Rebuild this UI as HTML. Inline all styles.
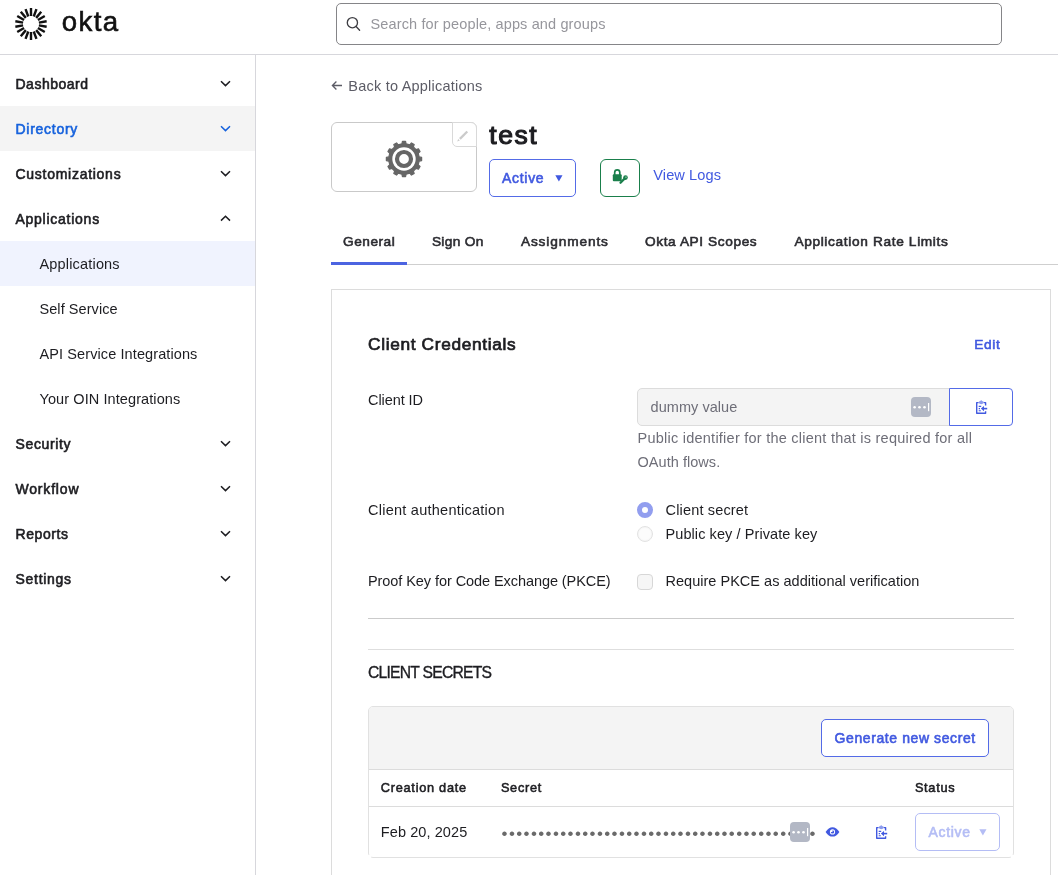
<!DOCTYPE html>
<html lang="en">
<head>
<meta charset="utf-8">
<title>test - Okta Admin</title>
<style>
*{box-sizing:border-box;margin:0;padding:0}
html,body{width:1058px;height:875px;overflow:hidden;background:#fff}
body{position:relative;font-family:"Liberation Sans",sans-serif;color:#1d1d21;font-size:14px}
#root{position:absolute;left:0;top:0;width:1058px;height:875px;will-change:transform}
.a{position:absolute;white-space:nowrap;line-height:1}
.box{position:absolute}
#hdr{left:0;top:0;width:1058px;height:55px;border-bottom:1px solid #d7d7dc;background:#fff}
#side{left:0;top:55px;width:256px;height:820px;border-right:1px solid #d7d7dc;background:#fff}
#search{left:336px;top:3px;width:666px;height:42px;border:1px solid #858588;border-radius:5px}
#logo{left:331px;top:122px;width:146px;height:70px;border:1px solid #c9c9c9;border-radius:6px}
#pen{left:452px;top:122px;width:25px;height:25px;border:1px solid #d9d9d9;border-radius:0 6px 0 5px;background:#fff}
.btn{border:1px solid #546be7;border-radius:5px;background:#fff}
#lockbtn{left:600px;top:159px;width:40px;height:38px;border:1px solid #1a7f4b;border-radius:6px}
#tabline{left:331px;top:264px;width:727px;height:1px;background:#cfcfcf}
#tabsel{left:331px;top:262px;width:76px;height:3px;background:#4c64e1}
#panel{left:331px;top:289px;width:720px;height:600px;border:1px solid #dcdcdc}
#cid{left:637px;top:388px;width:313px;height:38px;background:#f4f4f4;border:1px solid #dcdcdc;border-radius:5px 0 0 5px}
.pm{width:20px;height:20px;border-radius:4px;background:#b3b8c5}
.radio{width:16px;height:16px;border-radius:50%;border:1.5px solid #e2e2e2;background:#fcfcfc;box-shadow:inset 0 0 1.5px #e6e6e6}
.radio.on{border:5px solid #929eef;background:#fff;box-shadow:none}
.chk{width:16px;height:16px;border-radius:4px;border:1px solid #d7d7d7;background:#f6f6f6}
.hr{left:368px;width:646px;height:1px;background:#d4d4d4}
#tbl{left:368px;top:706px;width:646px;height:152px;border:1px solid #e1e1e1;border-radius:5px}
#tbar{left:369px;top:707px;width:644px;height:63px;background:#f4f4f4;border-bottom:1px solid #dcdcdc;border-radius:4px 4px 0 0}
#thead{left:369px;top:806px;width:644px;height:1px;background:#dcdcdc}
</style>
</head>
<body>
<div id="root">
<div class="box" id="hdr"></div>
<div class="box" id="side"></div>
<div class="box" style="left:0;top:106px;width:255px;height:45px;background:#f4f4f4"></div>
<div class="box" style="left:0;top:241px;width:255px;height:45px;background:#f0f3fe"></div>
<svg class="a" style="left:14px;top:7px" width="34" height="34" viewBox="-17 -17 34 34"><path d="M0.00 -8.00L0.00 -15.90M2.74 -7.52L5.44 -14.94M5.14 -6.13L10.22 -12.18M6.93 -4.00L13.77 -7.95M7.88 -1.39L15.66 -2.76M7.88 1.39L15.66 2.76M6.93 4.00L13.77 7.95M5.14 6.13L10.22 12.18M2.74 7.52L5.44 14.94M0.00 8.00L0.00 15.90M-2.74 7.52L-5.44 14.94M-5.14 6.13L-10.22 12.18M-6.93 4.00L-13.77 7.95M-7.88 1.39L-15.66 2.76M-7.88 -1.39L-15.66 -2.76M-6.93 -4.00L-13.77 -7.95M-5.14 -6.13L-10.22 -12.18M-2.74 -7.52L-5.44 -14.94" stroke="#111" stroke-width="2.4" fill="none"/></svg>
<span class="a" style="left:61.8px;top:8px;font-size:27.6px;letter-spacing:1.4px;color:#111;-webkit-text-stroke:0.6px #111">okta</span>
<svg class="a" style="left:220.3px;top:79.8px" width="11" height="7" viewBox="0 0 11 7"><polyline points="1 1.2 5.5 5.6 10 1.2" fill="none" stroke="#1d1d21" stroke-width="1.5"/></svg>
<svg class="a" style="left:220.3px;top:124.8px" width="11" height="7" viewBox="0 0 11 7"><polyline points="1 1.2 5.5 5.6 10 1.2" fill="none" stroke="#1662dd" stroke-width="1.5"/></svg>
<svg class="a" style="left:220.3px;top:169.8px" width="11" height="7" viewBox="0 0 11 7"><polyline points="1 1.2 5.5 5.6 10 1.2" fill="none" stroke="#1d1d21" stroke-width="1.5"/></svg>
<svg class="a" style="left:220.3px;top:214.8px" width="11" height="7" viewBox="0 0 11 7"><polyline points="1 5.6 5.5 1.2 10 5.6" fill="none" stroke="#1d1d21" stroke-width="1.5"/></svg>
<svg class="a" style="left:220.3px;top:439.8px" width="11" height="7" viewBox="0 0 11 7"><polyline points="1 1.2 5.5 5.6 10 1.2" fill="none" stroke="#1d1d21" stroke-width="1.5"/></svg>
<svg class="a" style="left:220.3px;top:484.8px" width="11" height="7" viewBox="0 0 11 7"><polyline points="1 1.2 5.5 5.6 10 1.2" fill="none" stroke="#1d1d21" stroke-width="1.5"/></svg>
<svg class="a" style="left:220.3px;top:529.8px" width="11" height="7" viewBox="0 0 11 7"><polyline points="1 1.2 5.5 5.6 10 1.2" fill="none" stroke="#1d1d21" stroke-width="1.5"/></svg>
<svg class="a" style="left:220.3px;top:574.8px" width="11" height="7" viewBox="0 0 11 7"><polyline points="1 1.2 5.5 5.6 10 1.2" fill="none" stroke="#1d1d21" stroke-width="1.5"/></svg>
<div class="box" id="search"></div>
<svg class="a" style="left:346px;top:16px" width="16" height="16" viewBox="0 0 16 16"><circle cx="6.4" cy="6.7" r="5.1" fill="none" stroke="#3f3f44" stroke-width="1.35"/><path d="M10.1 10.5L13.6 14.2" stroke="#3f3f44" stroke-width="1.35" stroke-linecap="round"/></svg>
<svg class="a" style="left:331px;top:80px" width="12" height="11" viewBox="0 0 12 11"><path d="M11 5.5H1.6M5.4 1.5L1.4 5.5L5.4 9.5" fill="none" stroke="#5c5c66" stroke-width="1.3"/></svg>
<div class="box" id="logo"></div>
<div class="box" id="pen"></div>
<svg class="a" style="left:456.3px;top:128.6px" width="14" height="14" viewBox="0 0 14 14"><path d="M3.9 9.9L11.3 2.5" stroke="#cbcbcb" stroke-width="2.3" fill="none"/><path d="M1.2 12.4L2.2 9.9L3.8 11.5Z" fill="#cbcbcb"/></svg>
<svg class="a" style="left:384.8px;top:139.5px" width="38" height="38" viewBox="-19 -19 38 38"><path d="M-2.08 -15.16 L-1.57 -17.63 L1.57 -17.63 L2.08 -15.16 L5.78 -14.17 L7.45 -16.05 L10.18 -14.48 L9.38 -12.09 L12.09 -9.38 L14.48 -10.18 L16.05 -7.45 L14.17 -5.78 L15.16 -2.08 L17.63 -1.57 L17.63 1.57 L15.16 2.08 L14.17 5.78 L16.05 7.45 L14.48 10.18 L12.09 9.38 L9.38 12.09 L10.18 14.48 L7.45 16.05 L5.78 14.17 L2.08 15.16 L1.57 17.63 L-1.57 17.63 L-2.08 15.16 L-5.78 14.17 L-7.45 16.05 L-10.18 14.48 L-9.38 12.09 L-12.09 9.38 L-14.48 10.18 L-16.05 7.45 L-14.17 5.78 L-15.16 2.08 L-17.63 1.57 L-17.63 -1.57 L-15.16 -2.08 L-14.17 -5.78 L-16.05 -7.45 L-14.48 -10.18 L-12.09 -9.38 L-9.38 -12.09 L-10.18 -14.48 L-7.45 -16.05 L-5.78 -14.17 Z" fill="#666" stroke="#666" stroke-width="1.2" stroke-linejoin="round"/><circle r="11.7" fill="#fff"/><circle r="7" fill="none" stroke="#666" stroke-width="4.2"/></svg>
<div class="box btn" style="left:489px;top:159px;width:87px;height:38px"></div>
<svg class="a" style="left:555px;top:175px" width="8" height="7" viewBox="0 0 8 7"><path d="M0.3 0.2H7.5L3.9 6.6Z" fill="#4159e0"/></svg>
<div class="box" id="lockbtn"></div>
<svg class="a" style="left:610px;top:167px" width="20" height="18" viewBox="610 167 20 18"><rect x="612.8" y="174.3" width="8.9" height="6.9" rx="1" fill="#1a7f4b"/><path d="M614.7 175V172.4a2.55 2.55 0 0 1 5.1 0V175" fill="none" stroke="#1a7f4b" stroke-width="1.7"/><path d="M620.5 182.7L624.8 178.4" stroke="#1a7f4b" stroke-width="2.3" stroke-linecap="round"/><circle cx="625.5" cy="177.6" r="2.3" fill="#1a7f4b"/><circle cx="626" cy="177.1" r="0.6" fill="#fff"/></svg>
<div class="box" id="tabline"></div>
<div class="box" id="tabsel"></div>
<div class="box" id="panel"></div>
<div class="box" id="cid"></div>
<div class="box pm" style="left:911px;top:397px"><svg width="20" height="20" viewBox="0 0 20 20"><circle cx="3.6" cy="10.2" r="1.3" fill="#fff"/><circle cx="8.5" cy="10.2" r="1.3" fill="#fff"/><circle cx="13.5" cy="10.2" r="1.3" fill="#fff"/><rect x="17" y="6" width="1.2" height="8.2" fill="#fff"/></svg></div>
<div class="box btn" style="left:949px;top:388px;width:64px;height:38px;border-radius:0 4px 4px 0"></div>
<svg class="a" style="left:974px;top:399px" width="15" height="16" viewBox="0 0 15 16"><path d="M4.6 3.6H2.7V14.3H11.6V12.2M11.6 6.4V3.6H9.8" fill="none" stroke="#4159e0" stroke-width="1.4" stroke-linejoin="round"/><path d="M4.2 3.4Q7.2 7 10.2 3.4L9 2.3H8.3Q7.2 0 6.1 2.3H5.4Z" fill="#8c9bee"/><path d="M13.2 9.6H9" stroke="#4159e0" stroke-width="1.6"/><path d="M6.9 9.6L10 7V12.2Z" fill="#4159e0"/><path d="M4.7 7.4H7.2M4.7 9.6H6M4.7 11.8H6.8" stroke="#4159e0" stroke-width="1.1"/></svg>
<div class="box radio on" style="left:637px;top:502px"></div>
<div class="box radio" style="left:637px;top:526px"></div>
<div class="box chk" style="left:637px;top:574px"></div>
<div class="box hr" style="top:618px;background:#cbcbcb"></div>
<div class="box hr" style="top:649px;background:#dedede"></div>
<div class="box" id="tbl"></div>
<div class="box" id="tbar"></div>
<div class="box" id="thead"></div>
<div class="box" style="left:368px;top:855px;width:3px;height:3px;background:#fff"></div>
<div class="box" style="left:1011px;top:855px;width:3px;height:3px;background:#fff"></div>
<div class="box btn" style="left:821px;top:719px;width:168px;height:38px"></div>
<span class="a" id="dots" style="left:501.6px;top:824.6px;font-size:17px;color:#6a6a6a;letter-spacing:1.38px">&#8226;&#8226;&#8226;&#8226;&#8226;&#8226;&#8226;&#8226;&#8226;&#8226;&#8226;&#8226;&#8226;&#8226;&#8226;&#8226;&#8226;&#8226;&#8226;&#8226;&#8226;&#8226;&#8226;&#8226;&#8226;&#8226;&#8226;&#8226;&#8226;&#8226;&#8226;&#8226;&#8226;&#8226;&#8226;&#8226;&#8226;&#8226;&#8226;&#8226;&#8226;&#8226;&#8226;</span>
<div class="box pm" style="left:790px;top:822px"><svg width="20" height="20" viewBox="0 0 20 20"><circle cx="3.6" cy="10.2" r="1.3" fill="#fff"/><circle cx="8.5" cy="10.2" r="1.3" fill="#fff"/><circle cx="13.5" cy="10.2" r="1.3" fill="#fff"/><rect x="17" y="6" width="1.2" height="8.2" fill="#fff"/></svg></div>
<svg class="a" style="left:825px;top:826px" width="15" height="12" viewBox="0 0 15 12"><path d="M0.6 5.9Q3.6 1.2 7.5 1.2Q11.4 1.2 14.4 5.9Q11.4 10.6 7.5 10.6Q3.6 10.6 0.6 5.9Z" fill="#4159e0"/><circle cx="7.5" cy="5.9" r="2.6" fill="#fff"/><path d="M7.5 5.9V4.2A1.7 1.7 0 1 1 5.8 5.9Z" fill="#4159e0"/></svg>
<svg class="a" style="left:874px;top:824px" width="15" height="16" viewBox="0 0 15 16"><path d="M4.6 3.6H2.7V14.3H11.6V12.2M11.6 6.4V3.6H9.8" fill="none" stroke="#4159e0" stroke-width="1.4" stroke-linejoin="round"/><path d="M4.2 3.4Q7.2 7 10.2 3.4L9 2.3H8.3Q7.2 0 6.1 2.3H5.4Z" fill="#8c9bee"/><path d="M13.2 9.6H9" stroke="#4159e0" stroke-width="1.6"/><path d="M6.9 9.6L10 7V12.2Z" fill="#4159e0"/><path d="M4.7 7.4H7.2M4.7 9.6H6M4.7 11.8H6.8" stroke="#4159e0" stroke-width="1.1"/></svg>
<div class="box btn" style="left:915px;top:813px;width:85px;height:38px;border-color:#b4bdf5"></div>
<svg class="a" style="left:979px;top:828.5px" width="8" height="7" viewBox="0 0 8 7"><path d="M0.3 0.2H7.5L3.9 6.6Z" fill="#b4bdf5"/></svg>
<span class="a" style="left:15.50px;top:77.21px;font-size:13.99px;font-weight:400;color:#1d1d21;-webkit-text-stroke:0.60px #1d1d21;letter-spacing:0.503px;">Dashboard</span>
<span class="a" style="left:15.50px;top:122.21px;font-size:13.99px;font-weight:400;color:#1662dd;-webkit-text-stroke:0.60px #1662dd;letter-spacing:0.735px;">Directory</span>
<span class="a" style="left:15.50px;top:167.21px;font-size:13.99px;font-weight:400;color:#1d1d21;-webkit-text-stroke:0.60px #1d1d21;letter-spacing:0.733px;">Customizations</span>
<span class="a" style="left:15.50px;top:212.21px;font-size:13.99px;font-weight:400;color:#1d1d21;-webkit-text-stroke:0.60px #1d1d21;letter-spacing:0.747px;">Applications</span>
<span class="a" style="left:39.50px;top:256.93px;font-size:14.5px;font-weight:400;color:#1d1d21;letter-spacing:0.175px;">Applications</span>
<span class="a" style="left:39.50px;top:301.93px;font-size:14.5px;font-weight:400;color:#1d1d21;letter-spacing:0.063px;">Self Service</span>
<span class="a" style="left:39.50px;top:346.93px;font-size:14.5px;font-weight:400;color:#1d1d21;letter-spacing:0.099px;">API Service Integrations</span>
<span class="a" style="left:39.50px;top:391.93px;font-size:14.5px;font-weight:400;color:#1d1d21;letter-spacing:0.092px;">Your OIN Integrations</span>
<span class="a" style="left:15.50px;top:437.21px;font-size:13.99px;font-weight:400;color:#1d1d21;-webkit-text-stroke:0.60px #1d1d21;letter-spacing:0.649px;">Security</span>
<span class="a" style="left:15.50px;top:482.21px;font-size:13.99px;font-weight:400;color:#1d1d21;-webkit-text-stroke:0.60px #1d1d21;letter-spacing:0.820px;">Workflow</span>
<span class="a" style="left:15.50px;top:527.21px;font-size:13.99px;font-weight:400;color:#1d1d21;-webkit-text-stroke:0.60px #1d1d21;letter-spacing:0.574px;">Reports</span>
<span class="a" style="left:15.50px;top:572.21px;font-size:13.99px;font-weight:400;color:#1d1d21;-webkit-text-stroke:0.60px #1d1d21;letter-spacing:0.716px;">Settings</span>
<span class="a" style="left:370.50px;top:16.73px;font-size:14.5px;font-weight:400;color:#96969c;letter-spacing:0.132px;">Search for people, apps and groups</span>
<span class="a" style="left:348.30px;top:78.53px;font-size:14.5px;font-weight:400;color:#5c5c66;letter-spacing:0.221px;">Back to Applications</span>
<span class="a" style="left:489.20px;top:121.98px;font-size:26.54px;font-weight:400;color:#1d1d21;-webkit-text-stroke:1.14px #1d1d21;letter-spacing:1.581px;">test</span>
<span class="a" style="left:502.00px;top:170.81px;font-size:13.99px;font-weight:400;color:#4159e0;-webkit-text-stroke:0.60px #4159e0;letter-spacing:0.710px;">Active</span>
<span class="a" style="left:653.30px;top:168.34px;font-size:14.6px;font-weight:400;color:#4159e0;letter-spacing:0.073px;">View Logs</span>
<span class="a" style="left:343.00px;top:234.95px;font-size:13.7px;font-weight:400;color:#2c2c31;-webkit-text-stroke:0.59px #2c2c31;letter-spacing:0.507px;">General</span>
<span class="a" style="left:431.90px;top:234.95px;font-size:13.7px;font-weight:400;color:#2c2c31;-webkit-text-stroke:0.59px #2c2c31;letter-spacing:0.343px;">Sign On</span>
<span class="a" style="left:520.90px;top:234.95px;font-size:13.7px;font-weight:400;color:#2c2c31;-webkit-text-stroke:0.59px #2c2c31;letter-spacing:0.871px;">Assignments</span>
<span class="a" style="left:645.00px;top:234.95px;font-size:13.7px;font-weight:400;color:#2c2c31;-webkit-text-stroke:0.59px #2c2c31;letter-spacing:0.587px;">Okta API Scopes</span>
<span class="a" style="left:794.40px;top:234.95px;font-size:13.7px;font-weight:400;color:#2c2c31;-webkit-text-stroke:0.59px #2c2c31;letter-spacing:0.647px;">Application Rate Limits</span>
<span class="a" style="left:368.00px;top:335.93px;font-size:17.27px;font-weight:400;color:#1d1d21;-webkit-text-stroke:0.74px #1d1d21;letter-spacing:0.664px;">Client Credentials</span>
<span class="a" style="left:974.20px;top:337.95px;font-size:13.7px;font-weight:400;color:#4159e0;-webkit-text-stroke:0.59px #4159e0;letter-spacing:0.688px;">Edit</span>
<span class="a" style="left:368.00px;top:392.53px;font-size:14.5px;font-weight:400;color:#1d1d21;letter-spacing:-0.083px;">Client ID</span>
<span class="a" style="left:650.60px;top:399.73px;font-size:14.5px;font-weight:400;color:#6e6e78;letter-spacing:0.044px;">dummy value</span>
<span class="a" style="left:637.50px;top:430.53px;font-size:14.5px;font-weight:400;color:#6e6e78;letter-spacing:0.243px;">Public identifier for the client that is required for all</span>
<span class="a" style="left:637.50px;top:454.53px;font-size:14.5px;font-weight:400;color:#6e6e78;letter-spacing:0.043px;">OAuth flows.</span>
<span class="a" style="left:368.00px;top:502.73px;font-size:14.5px;font-weight:400;color:#1d1d21;letter-spacing:0.253px;">Client authentication</span>
<span class="a" style="left:665.50px;top:502.73px;font-size:14.5px;font-weight:400;color:#1d1d21;letter-spacing:0.169px;">Client secret</span>
<span class="a" style="left:665.50px;top:526.63px;font-size:14.5px;font-weight:400;color:#1d1d21;letter-spacing:0.085px;">Public key / Private key</span>
<span class="a" style="left:368.00px;top:574.33px;font-size:14.5px;font-weight:400;color:#1d1d21;letter-spacing:-0.072px;">Proof Key for Code Exchange (PKCE)</span>
<span class="a" style="left:665.50px;top:574.33px;font-size:14.5px;font-weight:400;color:#1d1d21;letter-spacing:0.021px;">Require PKCE as additional verification</span>
<span class="a" style="left:368.00px;top:664.71px;font-size:15.7px;font-weight:400;color:#1d1d21;letter-spacing:-0.768px;-webkit-text-stroke:0.35px #1d1d21;">CLIENT SECRETS</span>
<span class="a" style="left:834.60px;top:731.01px;font-size:13.99px;font-weight:400;color:#4159e0;-webkit-text-stroke:0.60px #4159e0;letter-spacing:0.598px;">Generate new secret</span>
<span class="a" style="left:380.80px;top:782.47px;font-size:12.74px;font-weight:400;color:#1d1d21;-webkit-text-stroke:0.55px #1d1d21;letter-spacing:0.738px;">Creation date</span>
<span class="a" style="left:500.90px;top:782.47px;font-size:12.74px;font-weight:400;color:#1d1d21;-webkit-text-stroke:0.55px #1d1d21;letter-spacing:0.725px;">Secret</span>
<span class="a" style="left:914.90px;top:782.47px;font-size:12.74px;font-weight:400;color:#1d1d21;-webkit-text-stroke:0.55px #1d1d21;letter-spacing:0.726px;">Status</span>
<span class="a" style="left:380.80px;top:824.93px;font-size:14.5px;font-weight:400;color:#1d1d21;letter-spacing:0.090px;">Feb 20, 2025</span>
<span class="a" style="left:928.50px;top:824.51px;font-size:13.99px;font-weight:400;color:#b4bdf5;-webkit-text-stroke:0.60px #b4bdf5;letter-spacing:0.692px;">Active</span>
</div>
</body>
</html>
